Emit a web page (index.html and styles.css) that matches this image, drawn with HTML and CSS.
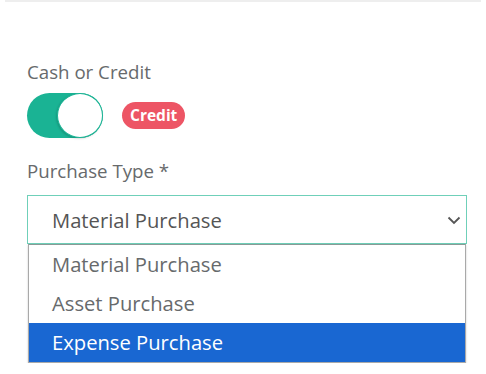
FILE: index.html
```html
<!DOCTYPE html>
<html lang="en">
<head>
    <meta charset="UTF-8">
    <title>Purchase Form</title>
    <link rel="stylesheet" href="styles.css">
</head>
<body>
<div class="topline"></div>
<div class="form">
    <!-- Cash / credit switch -->
    <label class="field-label">Cash or Credit</label>
    <div class="switch-row">
        <div class="switch on"><span class="knob"></span></div>
        <span class="badge">Credit</span>
    </div>

    <!-- Purchase type select, shown open -->
    <label class="field-label">Purchase Type *</label>
    <div class="select">
        <span>Material Purchase</span>
        <svg class="chevron" width="14" height="9" viewBox="0 0 14 9"><path d="M1.5 1.5 L7 7 L12.5 1.5" fill="none" stroke="#555" stroke-width="1.8"/></svg>
    </div>
    <ul class="options">
        <li>Material Purchase</li>
        <li>Asset Purchase</li>
        <li class="selected">Expense Purchase</li>
    </ul>
</div>
</body>
</html>
```

FILE: styles.css
```css
* { box-sizing: border-box; }
body {
    font-family: "Open Sans", Arial, sans-serif;
    margin: 0;
    padding: 0;
    background-color: #fff;
    color: #676a6c;
}
.topline {
    margin: 0 5px;
    height: 2px;
    background-color: #eee;
}
.form {
    padding: 57px 19px 0 27px;
}
.field-label {
    display: block;
    font-size: 18.7px;
    line-height: 26px;
    color: #676a6c;
}
.switch-row {
    display: flex;
    align-items: center;
    gap: 19px;
    margin-top: 8px;
    margin-bottom: 20px;
}
.switch {
    position: relative;
    width: 76px;
    height: 45px;
    border-radius: 23px;
    background-color: #1ab394;
}
.switch .knob {
    position: absolute;
    top: 0;
    right: 0;
    width: 46px;
    height: 45px;
    border-radius: 50%;
    background-color: #fff;
    border: 1px solid #1ab394;
    box-shadow: -1px 1px 2px rgba(0, 0, 0, 0.15);
}
.badge {
    display: inline-block;
    background-color: #ed5565;
    color: #fff;
    font-weight: bold;
    font-size: 15.5px;
    line-height: 27px;
    padding: 0 8px;
    border-radius: 14px;
}
.select {
    display: flex;
    align-items: center;
    justify-content: space-between;
    margin-top: 11px;
    height: 49px;
    padding: 0 5px 0 24px;
    border: 1px solid #6fd0b9;
    font-size: 20.2px;
    color: #555;
}
.chevron {
    margin-top: 1px;
}
.options {
    list-style: none;
    margin: 0 1px;
    padding: 0;
    border: 1px solid #a9a9a9;
    border-top: 1px solid #8a9a96;
    box-shadow: 0 1px 2px rgba(0, 0, 0, 0.2);
}
.options li {
    height: 39px;
    line-height: 39px;
    padding-left: 23px;
    font-size: 20.2px;
    color: #676a6c;
}
.options li.selected {
    background-color: #1967d2;
    color: #fff;
}
```
